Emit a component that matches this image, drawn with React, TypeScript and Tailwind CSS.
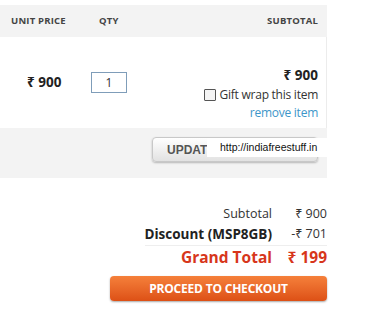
import React from "react";

export default function App() {
  const seg = { fontFamily: '"Open Sans", "Noto Sans", sans-serif' };
  const arial = { fontFamily: '"Liberation Sans", Arial, sans-serif' };
  return (
    <div className="w-[368px] h-[313px] bg-white overflow-hidden" style={seg}>
      <div className="w-[327px] pt-[5px]">
        {/* header */}
        <div className="h-[32px] bg-[#f3f3f3] flex items-center text-[9.5px] font-bold text-[#444] tracking-[0.2px]">
          <div className="pl-[11px] w-[99px]">UNIT PRICE</div>
          <div className="w-[40px]">QTY</div>
          <div className="flex-1 text-right pr-[9px]">SUBTOTAL</div>
        </div>
        {/* item row */}
        <div className="h-[91px] border-r border-[#ececec] flex">
          <div className="w-[91px] pl-[27px] pt-[36px] text-[13.5px] font-bold text-[#222] leading-[18px]">₹ 900</div>
          <div className="pt-[35px]">
            <div className="w-[36px] h-[21px] border border-[#7f9db9] flex items-center justify-center text-[12px] text-[#333]">1</div>
          </div>
          <div className="flex-1 flex flex-col items-end pr-[8px] pt-[28px]">
            <div className="text-[13.5px] font-bold text-[#222] leading-[20px]">₹ 900</div>
            <div className="flex items-center gap-[4px] text-[12px] tracking-[-0.25px] text-[#333] leading-[19px]">
              <div className="w-[12px] h-[12px] border border-[#555] bg-[#f4f4f4] rounded-[1px]" />
              <span>Gift wrap this item</span>
            </div>
            <div className="text-[12px] tracking-[-0.25px] text-[#3d96c9] leading-[17px]">remove item</div>
          </div>
        </div>
        {/* update band */}
        <div className="h-[50px] bg-[#f3f3f3] relative flex items-start justify-end pr-[9px] pt-[9px]">
          <div
            className="w-[166px] h-[25px] rounded-[4px] border border-[#c8c8c8] bg-gradient-to-b from-[#ffffff] to-[#e2e2e2] shadow-[0_1px_2px_rgba(0,0,0,0.25)] flex items-center pl-[14px] text-[12px] font-bold text-[#555]"
            style={arial}
          >
            UPDATE CART
          </div>
          <div
            className="absolute left-[207px] top-[10px] w-[128px] h-[19px] bg-white flex items-center pl-[13px] text-[10.5px] text-[#111]"
            style={arial}
          >
            http://indiafreestuff.in
          </div>
        </div>
      </div>
      {/* summary */}
      <div className="w-[327px] pt-[26px] flex flex-col items-end whitespace-nowrap">
        <div className="flex items-center text-[12.5px] text-[#333] leading-[20px]">
          <span>Subtotal</span>
          <span className="w-[55px] text-right">₹ 900</span>
        </div>
        <div className="flex items-center text-[12.5px] text-[#333] leading-[20px]">
          <span className="font-bold text-[#222] text-[13.5px]">Discount (MSP8GB)</span>
          <span className="w-[55px] text-right">-₹ 701</span>
        </div>
        <div className="w-[182px] h-[1px] bg-[#eeeeee] mt-[1px]" />
        <div className="flex items-center text-[15.5px] font-bold text-[#d7361b] leading-[22px]">
          <span>Grand Total</span>
          <span className="w-[55px] text-right">₹ 199</span>
        </div>
        <div className="mt-[8px] w-[217px] h-[25px] rounded-[4px] bg-gradient-to-b from-[#f5803a] to-[#dd5015] shadow-[0_1px_2px_rgba(0,0,0,0.35)] flex items-center justify-center text-white text-[12px] font-bold tracking-[-0.2px]">
          PROCEED TO CHECKOUT
        </div>
      </div>
    </div>
  );
}
